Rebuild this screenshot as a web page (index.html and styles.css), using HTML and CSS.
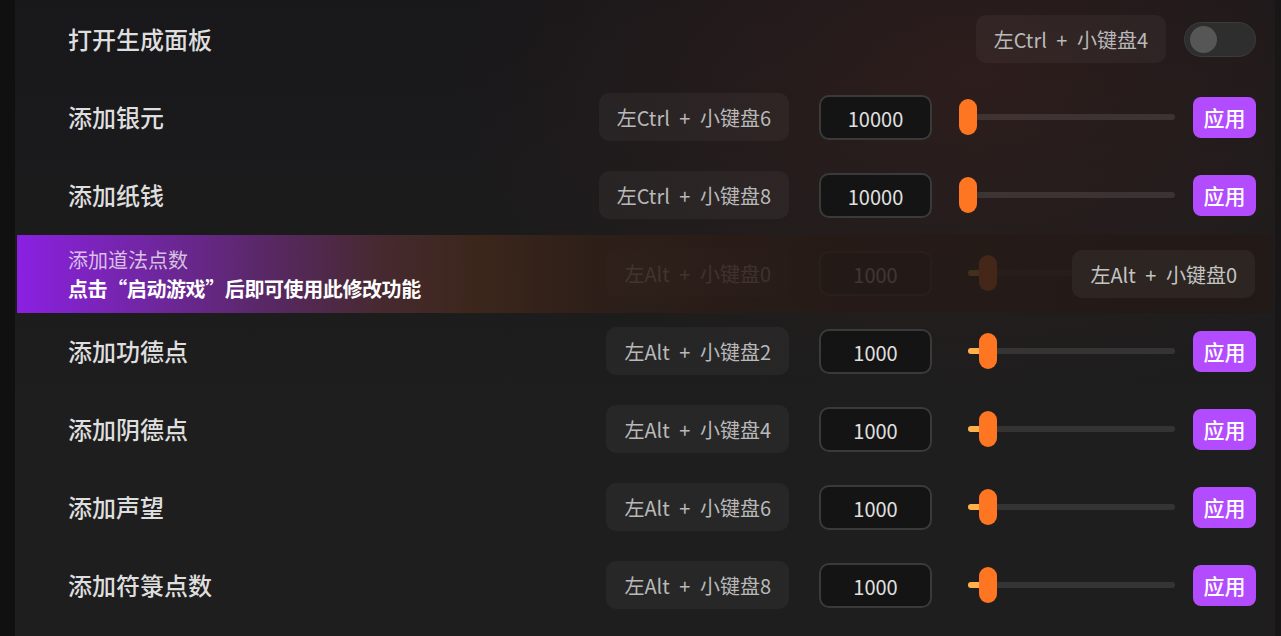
FILE: index.html
```html
<!DOCTYPE html>
<html lang="zh-CN">
<head>
<meta charset="utf-8">
<title>修改面板</title>
<link rel="stylesheet" href="styles.css">
</head>
<body>
<div class="app">
  <div class="side-left"></div>
  <main class="panel">
    <div class="row">
      <div class="label">打开生成面板</div>
      <div class="controls">
        <div class="key">左Ctrl + 小键盘4</div>
        <div class="toggle"><span class="knob"></span></div>
      </div>
    </div>

    <div class="row">
      <div class="label">添加银元</div>
      <div class="controls">
        <div class="key">左Ctrl + 小键盘6</div>
        <div class="num">10000</div>
        <div class="slider"><span class="fill" style="width:0px"></span><span class="thumb" style="left:-9px"></span></div>
        <button class="apply">应用</button>
      </div>
    </div>

    <div class="row">
      <div class="label">添加纸钱</div>
      <div class="controls">
        <div class="key">左Ctrl + 小键盘8</div>
        <div class="num">10000</div>
        <div class="slider"><span class="fill" style="width:0px"></span><span class="thumb" style="left:-9px"></span></div>
        <button class="apply">应用</button>
      </div>
    </div>

    <div class="row row-locked">
      <div class="dim">
        <div class="controls">
          <div class="key">左Alt + 小键盘0</div>
          <div class="num">1000</div>
          <div class="slider"><span class="fill" style="width:20px"></span><span class="thumb" style="left:11px"></span></div>
          <div class="apply-space"></div>
        </div>
      </div>
      <div class="lock-band">
        <div class="lock-text">
          <div class="lock-title">添加道法点数</div>
          <div class="lock-msg">点击“启动游戏”后即可使用此修改功能</div>
        </div>
        <div class="key key-band">左Alt + 小键盘0</div>
      </div>
    </div>

    <div class="row">
      <div class="label">添加功德点</div>
      <div class="controls">
        <div class="key">左Alt + 小键盘2</div>
        <div class="num">1000</div>
        <div class="slider"><span class="fill" style="width:20px"></span><span class="thumb" style="left:11px"></span></div>
        <button class="apply">应用</button>
      </div>
    </div>

    <div class="row">
      <div class="label">添加阴德点</div>
      <div class="controls">
        <div class="key">左Alt + 小键盘4</div>
        <div class="num">1000</div>
        <div class="slider"><span class="fill" style="width:20px"></span><span class="thumb" style="left:11px"></span></div>
        <button class="apply">应用</button>
      </div>
    </div>

    <div class="row">
      <div class="label">添加声望</div>
      <div class="controls">
        <div class="key">左Alt + 小键盘6</div>
        <div class="num">1000</div>
        <div class="slider"><span class="fill" style="width:20px"></span><span class="thumb" style="left:11px"></span></div>
        <button class="apply">应用</button>
      </div>
    </div>

    <div class="row">
      <div class="label">添加符箓点数</div>
      <div class="controls">
        <div class="key">左Alt + 小键盘8</div>
        <div class="num">1000</div>
        <div class="slider"><span class="fill" style="width:20px"></span><span class="thumb" style="left:11px"></span></div>
        <button class="apply">应用</button>
      </div>
    </div>
  </main>
  <div class="side-right"></div>
</div>
</body>
</html>
```

FILE: styles.css
```css
* { box-sizing: border-box; }

html, body {
  margin: 0;
  padding: 0;
  height: 100%;
  background: #111111;
  overflow: hidden;
  font-family: "Noto Sans CJK SC", "Noto Sans", sans-serif;
}

.app {
  display: flex;
  height: 636px;
}

.side-left {
  width: 15px;
  flex: none;
  background: #111011;
}

.side-right {
  width: 6px;
  flex: none;
  background: #181616;
}

.panel {
  flex: 1;
  display: flex;
  flex-direction: column;
  background:
    radial-gradient(ellipse 520px 330px at 960px 70px, rgba(72, 36, 30, 0.42), rgba(72, 36, 30, 0) 100%),
    linear-gradient(180deg, #18171a 0px, #1c1b1c 220px, #1e1e1e 420px);
}

.row {
  position: relative;
  height: 78px;
  flex: none;
  display: flex;
  align-items: center;
  justify-content: space-between;
  padding: 0 19px 0 53px;
}

.label {
  font-size: 24px;
  font-weight: 500;
  color: #dedede;
  line-height: 30px;
}

.controls {
  display: flex;
  align-items: center;
}

.key {
  height: 48px;
  padding: 0 18px;
  display: flex;
  align-items: center;
  border-radius: 10px;
  background: rgba(255, 255, 255, 0.045);
  color: #b9b9b9;
  font-size: 20px;
  word-spacing: 5px;
  white-space: nowrap;
}

.toggle {
  position: relative;
  margin-left: 18px;
  width: 72px;
  height: 35px;
  border-radius: 18px;
  background: #2e2e2e;
  border: 1px solid #3b3b3b;
}

.knob {
  position: absolute;
  left: 5px;
  top: 3px;
  width: 27px;
  height: 27px;
  border-radius: 50%;
  background: #565656;
}

.num {
  margin-left: 30px;
  width: 113px;
  height: 45px;
  display: flex;
  align-items: center;
  justify-content: center;
  border: 2px solid #3a3a3a;
  border-radius: 10px;
  background: #141414;
  color: #e0e0e0;
  font-size: 20px;
  padding-top: 2px;
}

.slider {
  position: relative;
  margin-left: 36px;
  width: 207px;
  height: 6px;
  border-radius: 3px;
  background: rgba(255, 255, 255, 0.1);
}

.fill {
  position: absolute;
  left: 0;
  top: 0;
  height: 6px;
  border-radius: 3px;
  background: #ffb24a;
}

.thumb {
  position: absolute;
  top: -15px;
  width: 18px;
  height: 36px;
  border-radius: 9px;
  background: #ff7622;
}

.apply {
  margin-left: 18px;
  width: 63px;
  height: 41px;
  border: none;
  border-radius: 8px;
  background: #b34bfe;
  color: #ffffff;
  font-family: "Noto Sans CJK SC", "Noto Sans", sans-serif;
  font-size: 21px;
  font-weight: 500;
  padding: 0;
}

.apply-space {
  margin-left: 18px;
  width: 63px;
  height: 41px;
}

/* locked row */
.dim {
  flex: 1;
  display: flex;
  align-items: center;
  justify-content: flex-end;
}

.lock-band {
  position: absolute;
  left: 2px;
  right: 2px;
  top: 1px;
  height: 78px;
  display: flex;
  align-items: center;
  justify-content: space-between;
  padding: 0 18px 0 51px;
  background: linear-gradient(90deg,
    rgb(139, 32, 226) 0%,
    rgb(114, 38, 164) 10%,
    rgb(88, 40, 100) 20%,
    rgba(72, 42, 48, 0.96) 29%,
    rgba(64, 40, 28, 0.9) 36%,
    rgba(48, 31, 24, 0.86) 46%,
    rgba(38, 26, 22, 0.86) 65%,
    rgba(34, 25, 22, 0.86) 100%);
}

.lock-text {
  display: flex;
  flex-direction: column;
}

.lock-title {
  font-size: 20px;
  line-height: 29px;
  color: rgba(255, 255, 255, 0.72);
}

.lock-msg {
  font-size: 20px;
  line-height: 29px;
  font-weight: 700;
  color: #ffffff;
  letter-spacing: -0.4px;
}

.key-band {
  background: #2d2521;
  color: #c4c4c4;
}
```
